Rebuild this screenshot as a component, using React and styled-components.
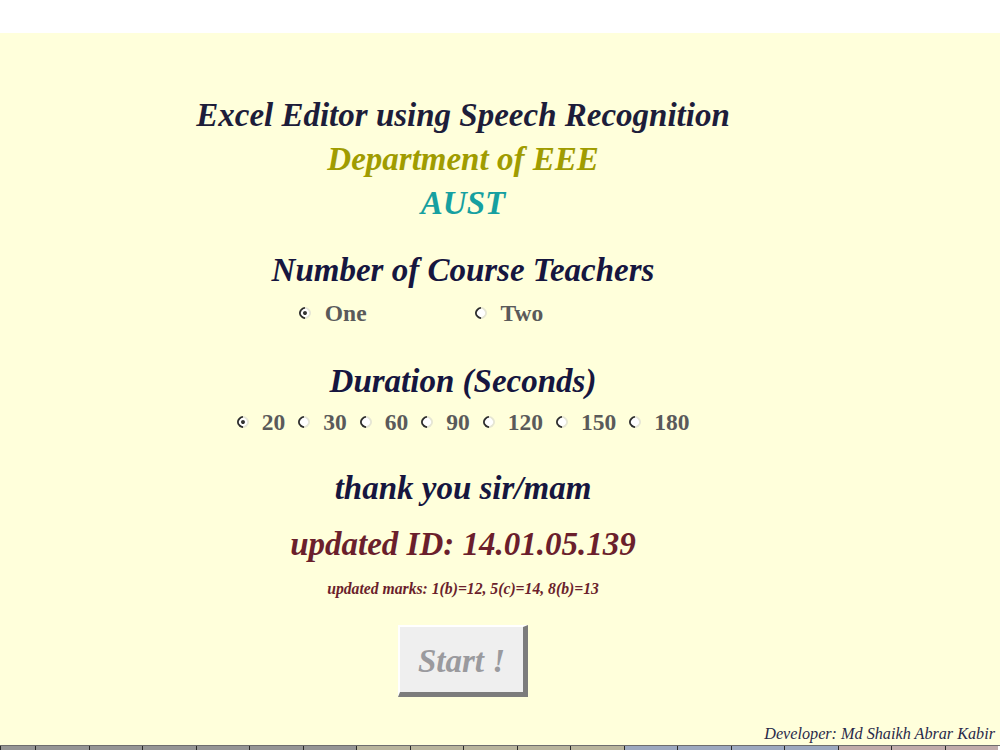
import React from 'react'
import styled, { createGlobalStyle } from 'styled-components'

const GlobalStyle = createGlobalStyle`
  html, body {
    margin: 0;
    padding: 0;
    background: #ffffff;
  }
  body {
    font-family: 'Liberation Serif', 'Times New Roman', serif;
  }
`

const Page = styled.div`
  width: 1000px;
  height: 750px;
  display: flex;
  flex-direction: column;
  overflow: hidden;
`

const TopGap = styled.div`
  height: 33px;
  background: #ffffff;
  flex: none;
`

const Sheet = styled.div`
  flex: 1;
  background: #ffffdb;
  display: flex;
  flex-direction: column;
`

const Main = styled.main`
  width: 926px;
  display: flex;
  flex-direction: column;
  align-items: center;
  padding-top: 60px;
`

const Heading = styled.h1`
  margin: 0;
  font-size: ${p => p.$size || 33}px;
  line-height: ${p => p.$line || 44}px;
  font-weight: bold;
  font-style: italic;
  color: ${p => p.$color || '#1d1d3a'};
  margin-top: ${p => p.$top || 0}px;
  white-space: nowrap;
`

const RadioRow = styled.div`
  display: flex;
  align-items: center;
  gap: ${p => p.$gap}px;
  margin-top: ${p => p.$top || 0}px;
  padding-right: ${p => p.$trail || 0}px;
  height: 30px;
`

const Option = styled.label`
  display: flex;
  align-items: center;
  gap: ${p => p.$gap}px;
  font-size: 23.5px;
  font-weight: bold;
  color: #5a5a5a;
`

const Dot = styled.span`
  width: 12px;
  height: 12px;
  box-sizing: border-box;
  border-radius: 50%;
  background: #ffffff;
  border: 2px solid;
  border-color: #2e2e2e #e6e6d4 #e6e6d4 #2e2e2e;
  display: flex;
  align-items: center;
  justify-content: center;
  transform: rotate(-45deg);

  &::after {
    content: '';
    width: 4px;
    height: 4px;
    border-radius: 50%;
    background: ${p => (p.$checked ? '#333' : 'transparent')};
  }
`

const StartButton = styled.button`
  margin-top: 25px;
  width: 130px;
  height: 72px;
  box-sizing: border-box;
  background: #efefef;
  border-style: solid;
  border-width: 2px 5px 5px 2px;
  border-color: #ffffff #7c7c7c #7c7c7c #ffffff;
  font-family: 'Liberation Serif', 'Times New Roman', serif;
  font-size: 33px;
  font-weight: bold;
  font-style: italic;
  color: #9a9a9e;
  padding: 3px 0 0;
`

const Footer = styled.div`
  margin-top: auto;
  display: flex;
  justify-content: flex-end;
  padding: 0 5px 1px 0;
  font-style: italic;
  font-size: 16.2px;
  color: #2a2a4a;
`

const TabStrip = styled.div`
  height: 4px;
  display: flex;
  flex: none;
  border-top: 1px solid #6e6e6e;
`

const Tab = styled.div`
  width: ${p => p.$width || 53.5}px;
  flex: none;
  background: ${p => p.$color};
  border-left: 1px solid #2a2a2a;
  box-sizing: border-box;
`

const teacherOptions = [
  { label: 'One', checked: true },
  { label: 'Two' },
]

const durations = ['20', '30', '60', '90', '120', '150', '180']

const tabColors = [
  ...Array(6).fill('#959595'),
  ...Array(5).fill('#b8b49c'),
  ...Array(4).fill('#9ca8bf'),
  ...Array(3).fill('#c0abab'),
]

const App = () => {
  return (
    <>
      <GlobalStyle />
      <Page>
        <TopGap />
        <Sheet>
          <Main>
            <Heading>Excel Editor using Speech Recognition</Heading>
            <Heading $color='#a09c00'>Department of EEE</Heading>
            <Heading $color='#16a0a0'>AUST</Heading>

            <Heading $top={23} $color='#16163f'>
              Number of Course Teachers
            </Heading>
            <RadioRow $gap={108} $top={6} $trail={84}>
              {teacherOptions.map(o => (
                <Option key={o.label} $gap={14}>
                  <Dot $checked={o.checked} />
                  {o.label}
                </Option>
              ))}
            </RadioRow>

            <Heading $top={31} $color='#16163f'>
              Duration (Seconds)
            </Heading>
            <RadioRow $gap={13} $top={4}>
              {durations.map((d, i) => (
                <Option key={d} $gap={13}>
                  <Dot $checked={i === 0} />
                  {d}
                </Option>
              ))}
            </RadioRow>

            <Heading $top={29} $color='#16163f'>
              thank you sir/mam
            </Heading>
            <Heading $top={12} $color='#6b1f2c'>
              updated ID: 14.01.05.139
            </Heading>
            <Heading $top={12} $size={15.7} $line={22} $color='#6b1f2c'>
              updated marks: 1(b)=12, 5(c)=14, 8(b)=13
            </Heading>

            <StartButton>Start !</StartButton>
          </Main>
          <Footer>Developer: Md Shaikh Abrar Kabir</Footer>
        </Sheet>
        <TabStrip>
          <Tab $width={35} $color='#959595' />
          {tabColors.map((c, i) => (
            <Tab key={i} $color={c} />
          ))}
        </TabStrip>
      </Page>
    </>
  )
}

export default App
